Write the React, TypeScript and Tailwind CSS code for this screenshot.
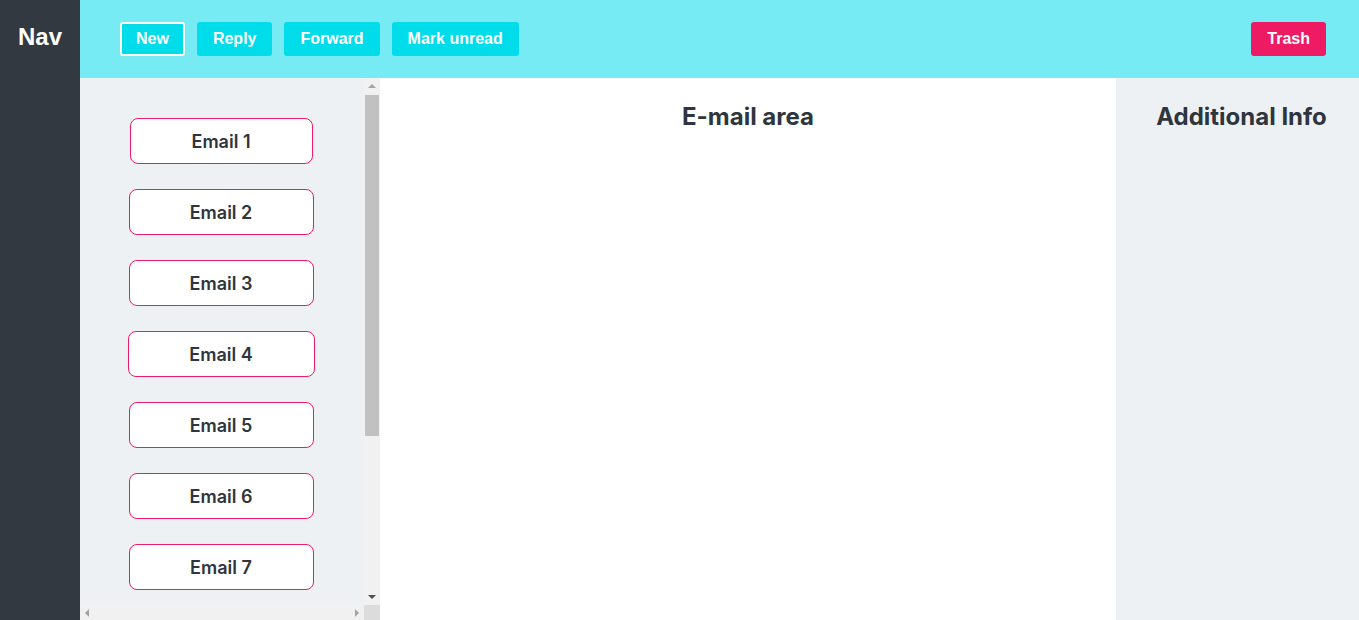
import React from "react";

const emails = [
  { n: 1, w: "w-[183px]" },
  { n: 2, w: "w-[185px]" },
  { n: 3, w: "w-[185px]" },
  { n: 4, w: "w-[187px]" },
  { n: 5, w: "w-[185px]" },
  { n: 6, w: "w-[185px]" },
  { n: 7, w: "w-[185px]" },
  { n: 8, w: "w-[185px]" },
  { n: 9, w: "w-[185px]" },
  { n: 10, w: "w-[185px]" },
];

function Tri({ dir }: { dir: "up" | "down" | "left" | "right" }) {
  const pts =
    dir === "up"
      ? "0,4 4,0 8,4"
      : dir === "down"
      ? "0,0 8,0 4,4"
      : dir === "left"
      ? "4,0 4,8 0,4"
      : "0,0 0,8 4,4";
  const w = dir === "up" || dir === "down" ? 8 : 4;
  const h = dir === "up" || dir === "down" ? 4 : 8;
  return (
    <svg width={w} height={h} viewBox={`0 0 ${w} ${h}`}>
      <polygon points={pts} fill={dir === "down" ? "#505050" : "#a3a3a3"} />
    </svg>
  );
}

export default function App() {
  return (
    <div className="flex h-[620px] w-full overflow-hidden">
      <aside className="w-[80px] shrink-0 bg-[#323940] flex justify-center pt-[23px]">
        <span className="text-white font-bold text-[24px] leading-[28px] font-['Liberation_Sans',Arial,sans-serif]">
          Nav
        </span>
      </aside>
      <div className="flex-1 flex flex-col min-w-0">
        <header className="h-[78px] shrink-0 bg-[#76ebf3] flex items-center pl-[40px] pr-[33px] font-['Liberation_Sans',Arial,sans-serif]">
          <div className="flex gap-[12px] items-center">
            <button className="h-[34px] px-[14px] rounded-[3px] border-2 border-white bg-[#00dcea] text-white font-bold text-[16px]">
              New
            </button>
            <button className="h-[34px] px-[16px] rounded-[3px] bg-[#00dcea] text-white font-bold text-[16px]">
              Reply
            </button>
            <button className="h-[34px] px-[16px] rounded-[3px] bg-[#00dcea] text-white font-bold text-[16px]">
              Forward
            </button>
            <button className="h-[34px] px-[16px] rounded-[3px] bg-[#00dcea] text-white font-bold text-[16px]">
              Mark unread
            </button>
          </div>
          <div className="flex-1" />
          <button className="h-[34px] px-[16px] rounded-[3px] bg-[#ef1a64] text-white font-bold text-[16px]">
            Trash
          </button>
        </header>
        <div className="flex flex-1 min-h-0 font-['Inter',sans-serif] text-[#2f353d]">
          <div className="w-[300px] shrink-0 bg-[#eef1f4] flex flex-col">
            <div className="flex flex-1 min-h-0">
              <div className="flex-1 overflow-hidden">
                <div className="flex flex-col items-center gap-[25px] pt-[40px] pb-[40px] pr-[2px]">
                  {emails.map((e) => (
                    <button
                      key={e.n}
                      className={`${e.w} h-[46px] shrink-0 rounded-[8px] border border-[#f0196a] bg-white font-semibold text-[18px]`}
                    >
                      Email {e.n}
                    </button>
                  ))}
                </div>
              </div>
              <div className="w-[16px] shrink-0 bg-[#f1f1f1] flex flex-col items-center">
                <div className="h-[17px] w-full flex items-center justify-center pb-[2px]">
                  <Tri dir="up" />
                </div>
                <div className="w-full flex-1 flex flex-col px-[1px]">
                  <div className="h-[341px] bg-[#c1c1c1]" />
                </div>
                <div className="h-[17px] w-full flex items-center justify-center">
                  <Tri dir="down" />
                </div>
              </div>
            </div>
            <div className="h-[15px] shrink-0 flex">
              <div className="flex-1 bg-[#f1f1f1] flex items-center justify-between px-[5px]">
                <Tri dir="left" />
                <Tri dir="right" />
              </div>
              <div className="w-[16px] bg-[#dcdcdc]" />
            </div>
          </div>
          <main className="flex-1 bg-white flex justify-center pt-[24px]">
            <h1 className="font-bold text-[24px] leading-[29px] h-fit">E-mail area</h1>
          </main>
          <aside className="w-[243px] shrink-0 bg-[#eef1f4] flex justify-center pt-[24px] pl-[8px]">
            <h2 className="font-bold text-[24px] leading-[29px] h-fit">Additional Info</h2>
          </aside>
        </div>
      </div>
    </div>
  );
}
